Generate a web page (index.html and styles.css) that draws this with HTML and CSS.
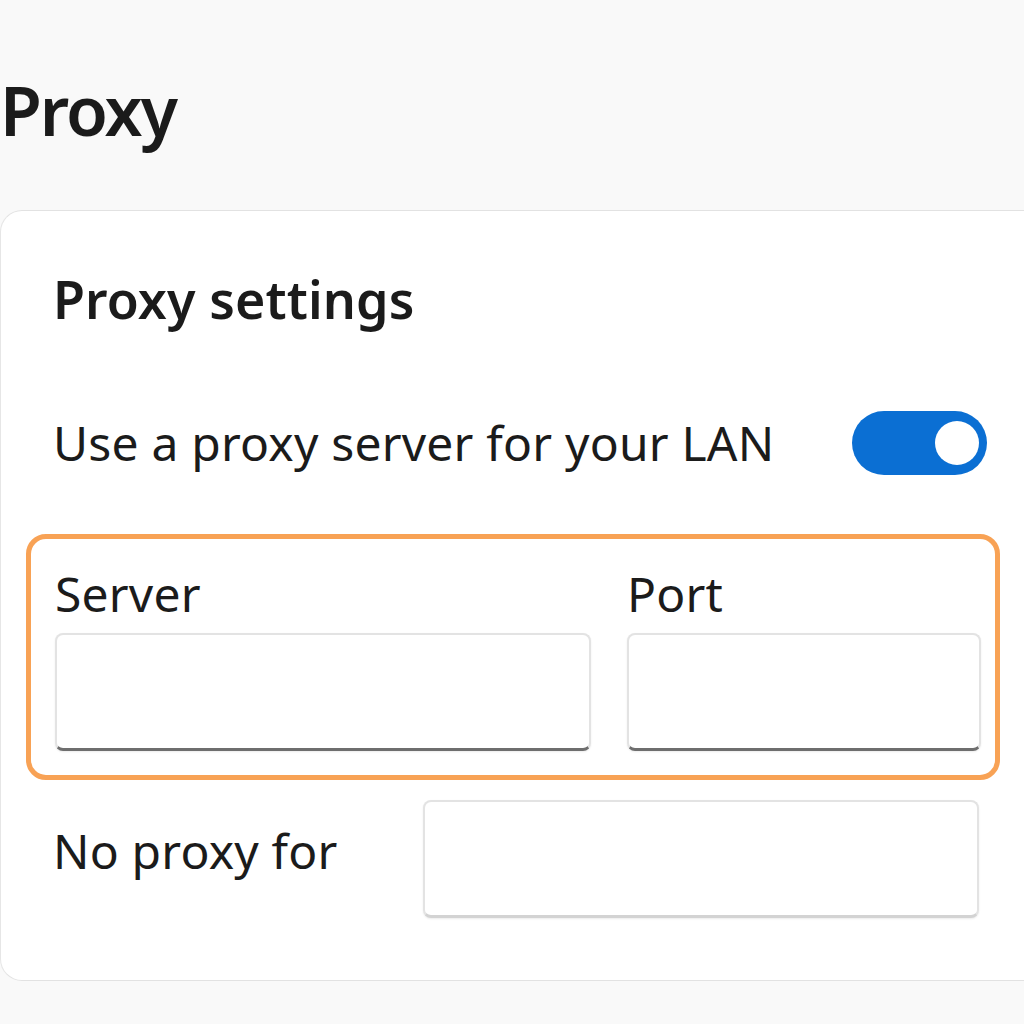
FILE: index.html
```html
<!DOCTYPE html>
<html lang="en">
<head>
<meta charset="utf-8">
<title>Proxy</title>
<link rel="stylesheet" href="styles.css">
</head>
<body>
<div class="page">
  <h1 class="title">Proxy</h1>
  <section class="card">
    <h2 class="card-title">Proxy settings</h2>
    <div class="toggle-row">
      <span class="label">Use a proxy server for your LAN</span>
      <span class="toggle"><span class="knob"></span></span>
    </div>
    <div class="fields">
      <div class="field">
        <span class="label">Server</span>
        <span class="input"></span>
      </div>
      <div class="field">
        <span class="label">Port</span>
        <span class="input"></span>
      </div>
    </div>
    <div class="noproxy-row">
      <span class="label noproxy-label">No proxy for</span>
      <span class="input wide"></span>
    </div>
  </section>
</div>
</body>
</html>
```
FILE: styles.css
```css
html, body {
  margin: 0;
  padding: 0;
  background: #f9f9f9;
  overflow: hidden;
}
body {
  font-family: "Noto Sans", "Open Sans", sans-serif;
  color: #1b1b1b;
  width: 1024px;
  height: 1024px;
}
.page {
  padding-top: 62px;
}
.title {
  margin: 0;
  font-size: 68px;
  font-weight: 600;
  line-height: 96px;
  letter-spacing: -2px;
}
.card {
  margin-top: 52px;
  margin-right: -40px;
  background: #fff;
  border: 1px solid #e2e2e2;
  border-left-color: #e6e6e6;
  border-radius: 22px;
  padding: 48px 76px 62px 52px;
}
.card-title {
  margin: 0;
  font-size: 52px;
  font-weight: 600;
  line-height: 80px;
  letter-spacing: 0.1px;
}
.label {
  font-size: 48px;
  line-height: 64px;
  font-weight: 400;
  letter-spacing: 0.2px;
}
.toggle-row {
  margin-top: 72px;
  display: flex;
  align-items: center;
  justify-content: space-between;
}
.toggle {
  width: 135px;
  height: 64px;
  border-radius: 32px;
  background: #0b6fd3;
  display: flex;
  align-items: center;
  justify-content: flex-end;
  padding-right: 8px;
  box-sizing: border-box;
}
.knob {
  width: 44px;
  height: 44px;
  border-radius: 50%;
  background: #fff;
}
.fields {
  margin: 59px -13px 0 -27px;
  border: 5px solid #f8a255;
  border-radius: 20px;
  padding: 23px 16px 24px 24px;
  display: grid;
  grid-template-columns: 536px 354px;
  column-gap: 36px;
}
.field {
  display: flex;
  flex-direction: column;
  gap: 7px;
}
.input {
  display: block;
  height: 118px;
  box-sizing: border-box;
  background: #fff;
  border: 2px solid #e3e3e3;
  border-bottom: 3px solid #6e6e6e;
  border-radius: 8px;
  box-shadow: 0 1px 2px rgba(0,0,0,0.08);
}
.noproxy-row {
  margin-top: 20px;
  margin-right: 8px;
  display: flex;
  align-items: center;
  justify-content: space-between;
}
.noproxy-label {
  margin-bottom: 16px;
}
.input.wide {
  width: 556px;
  border-bottom: 3px solid #d3d3d3;
}
```
